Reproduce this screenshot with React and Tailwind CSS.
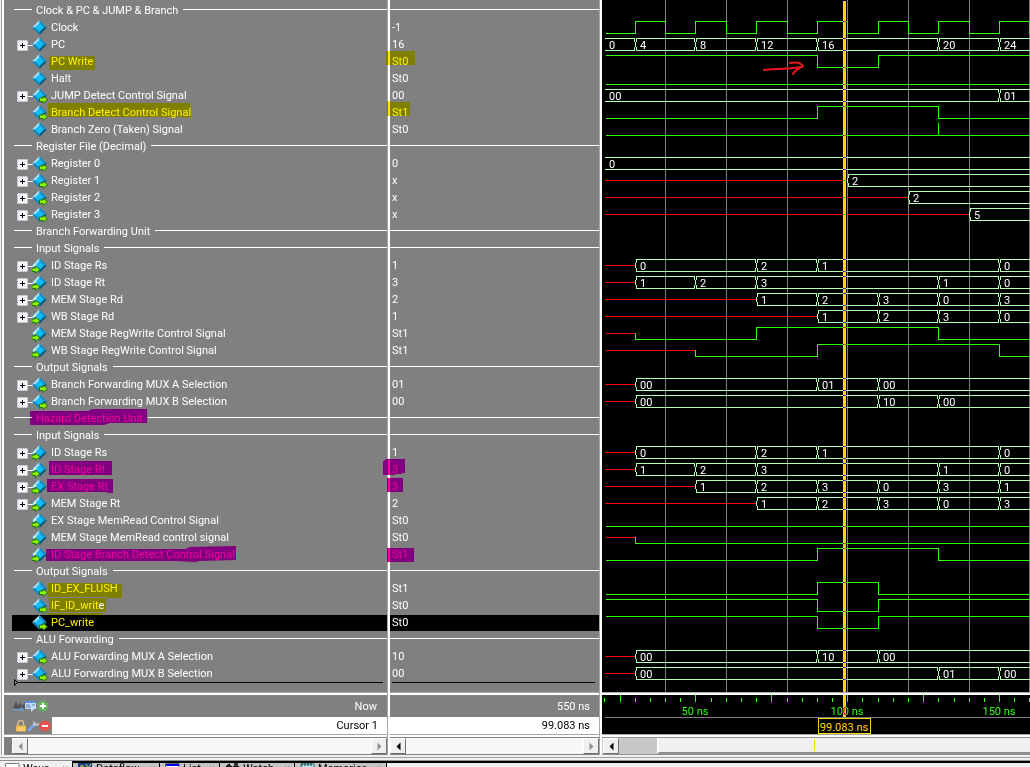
import React from "react";

/* ---------- data ---------- */

const bit = (...steps) => ({ type: "bit", steps });
const bus = (...steps) => ({ type: "bus", steps });

const clockSteps = Array.from({ length: 60 }, (_, i) => [20 + i * 10, i % 2]);

const ROWS = [
  { group: "Clock & PC & JUMP & Branch" },
  { name: "Clock", value: "-1", icon: "net", wave: bit(...clockSteps) },
  { name: "PC", value: "16", icon: "net", open: true, wave: bus([0, "0"], [30, "4"], [50, "8"], [70, "12"], [90, "16"], [130, "20"], [150, "24"]) },
  { name: "PC Write", value: "St0", icon: "net", mark: "yellow", wave: bit([0, 1], [90, 0], [110, 1]) },
  { name: "Halt", value: "St0", icon: "net", wave: bit([0, 0]) },
  { name: "JUMP Detect Control Signal", value: "00", icon: "out", open: true, wave: bus([0, "00"], [150, "01"]) },
  { name: "Branch Detect Control Signal", value: "St1", icon: "out", mark: "yellow", wave: bit([0, 0], [90, 1], [130, 0]) },
  { name: "Branch Zero (Taken) Signal", value: "St0", icon: "net", wave: bit([0, 0], [130, 1], [130, 0]) },
  { group: "Register File (Decimal)" },
  { name: "Register 0", value: "0", icon: "out", open: true, wave: bus([0, "0"]) },
  { name: "Register 1", value: "x", icon: "out", open: true, wave: bus([0, "x"], [100, "2"]) },
  { name: "Register 2", value: "x", icon: "out", open: true, wave: bus([0, "x"], [120, "2"]) },
  { name: "Register 3", value: "x", icon: "out", open: true, wave: bus([0, "x"], [140, "5"]) },
  { group: "Branch Forwarding Unit" },
  { group: "Input Signals" },
  { name: "ID Stage Rs", value: "1", icon: "in", open: true, wave: bus([0, "x"], [30, "0"], [70, "2"], [90, "1"], [150, "0"]) },
  { name: "ID Stage Rt", value: "3", icon: "in", open: true, wave: bus([0, "x"], [30, "1"], [50, "2"], [70, "3"], [130, "1"], [150, "0"]) },
  { name: "MEM Stage Rd", value: "2", icon: "in", open: true, wave: bus([0, "x"], [70, "1"], [90, "2"], [110, "3"], [130, "0"], [150, "3"]) },
  { name: "WB Stage Rd", value: "1", icon: "in", open: true, wave: bus([0, "x"], [90, "1"], [110, "2"], [130, "3"], [150, "0"]) },
  { name: "MEM Stage RegWrite Control Signal", value: "St1", icon: "in", wave: bit([0, "x"], [30, 0], [70, 1], [130, 0]) },
  { name: "WB Stage RegWrite Control Signal", value: "St1", icon: "in", wave: bit([0, "x"], [50, 0], [90, 1], [150, 0]) },
  { group: "Output Signals" },
  { name: "Branch Forwarding MUX A Selection", value: "01", icon: "out", open: true, wave: bus([0, "x"], [30, "00"], [90, "01"], [110, "00"]) },
  { name: "Branch Forwarding MUX B Selection", value: "00", icon: "out", open: true, wave: bus([0, "x"], [30, "00"], [110, "10"], [130, "00"]) },
  { group: "Hazard Detection Unit", mark: "pink" },
  { group: "Input Signals" },
  { name: "ID Stage Rs", value: "1", icon: "in", open: true, wave: bus([0, "x"], [30, "0"], [70, "2"], [90, "1"], [150, "0"]) },
  { name: "ID Stage Rt", value: "3", icon: "in", open: true, mark: "pink", wave: bus([0, "x"], [30, "1"], [50, "2"], [70, "3"], [130, "1"], [150, "0"]) },
  { name: "EX Stage Rt", value: "3", icon: "in", open: true, mark: "pink", wave: bus([0, "x"], [50, "1"], [70, "2"], [90, "3"], [110, "0"], [130, "3"], [150, "1"]) },
  { name: "MEM Stage Rt", value: "2", icon: "in", open: true, wave: bus([0, "x"], [70, "1"], [90, "2"], [110, "3"], [130, "0"], [150, "3"]) },
  { name: "EX Stage MemRead Control Signal", value: "St0", icon: "in", wave: bit([0, 0]) },
  { name: "MEM Stage MemRead control signal", value: "St0", icon: "in", wave: bit([0, "x"], [30, 0]) },
  { name: "ID Stage Branch Detect Control Signal", value: "St1", icon: "in", mark: "pink", wave: bit([0, 0], [90, 1], [130, 0]) },
  { group: "Output Signals" },
  { name: "ID_EX_FLUSH", value: "St1", icon: "out", mark: "yellow", plainValue: true, wave: bit([0, 0], [90, 1], [110, 0]) },
  { name: "IF_ID_writ", tail: "e", value: "St0", icon: "out", mark: "yellow", plainValue: true, wave: bit([0, 1], [90, 0], [110, 1]) },
  { name: "PC_write", value: "St0", icon: "out", mark: "yellow", plainValue: true, selected: true, wave: bit([0, 1], [90, 0], [110, 1]) },
  { group: "ALU Forwarding" },
  { name: "ALU Forwarding MUX A Selection", value: "10", icon: "out", open: true, wave: bus([0, "x"], [30, "00"], [90, "10"], [110, "00"]) },
  { name: "ALU Forwarding MUX B Selection", value: "00", icon: "out", open: true, wave: bus([0, "x"], [30, "00"], [130, "01"], [150, "00"]) },
];

const TABS = ["Wave", "Dataflow", "List", "Watch", "Memories"];

/* ---------- wave geometry ---------- */

const ROW = 17;
const FAR = 4000;
const CURSOR_X = 241;
const timeX = (t) => Math.floor(3.0365 * t - 57.88);
const GREEN = "#30ff10";
const BUS = "#b4ffb4";
const RED = "#ff0000";

function BitWave({ steps, c }) {
  const level = (v) => (v === "x" ? c : v === 1 ? c - 6 : c + 6);
  const out = [];
  steps.forEach(([t, v], i) => {
    const x0 = i === 0 ? 4 : timeX(t);
    const x1 = i + 1 < steps.length ? timeX(steps[i + 1][0]) : FAR;
    const y = level(v);
    out.push(<rect key={"h" + i} x={x0} y={y} width={x1 - x0 + 1} height="1" fill={v === "x" ? RED : GREEN} />);
    if (i > 0) {
      const p = level(steps[i - 1][1]);
      out.push(<rect key={"v" + i} x={x0} y={Math.min(p, y)} width="1" height={Math.abs(p - y) + 1} fill={GREEN} />);
    }
  });
  return <g>{out}</g>;
}

function BusWave({ steps, c }) {
  const top = c - 6;
  const bottom = c + 6;
  return (
    <g>
      {steps.map(([t, v], i) => {
        const first = i === 0;
        const last = i + 1 === steps.length;
        const x0 = first ? 3 : timeX(t);
        const x1 = last ? FAR : timeX(steps[i + 1][0]);
        if (v === "x") return <rect key={i} x={x0} y={c} width={x1 - x0} height="1" fill={RED} />;
        const a = first ? x0 : x0 + 1;
        const b = last ? x1 : x1 - 1;
        return (
          <g key={i} fill={BUS}>
            <rect x={a} y={top} width={b - a + 1} height="1" />
            <rect x={a} y={bottom} width={b - a + 1} height="1" />
            {!first && (
              <>
                <rect x={x0 + 1} y={top} width="1" height="4" />
                <rect x={x0} y={top + 4} width="1" height="5" />
                <rect x={x0 + 1} y={bottom - 3} width="1" height="4" />
              </>
            )}
            {!last && (
              <>
                <rect x={x1 - 1} y={top} width="1" height="4" />
                <rect x={x1 - 1} y={bottom - 3} width="1" height="4" />
              </>
            )}
            <text x={first ? 7 : x0 + 5} y={c + 5} fill="#fff">{v}</text>
          </g>
        );
      })}
    </g>
  );
}

function Waves() {
  return (
    <svg className="block h-[692px] w-full bg-black" role="img" aria-label="Waveforms" shapeRendering="crispEdges">
      {Array.from({ length: 40 }, (_, i) => (
        <rect key={i} x={timeX(40 + i * 20)} y="0" width="1" height="692" fill="#808080" />
      ))}
      {ROWS.map((r, i) => {
        if (!r.wave) return null;
        const Shape = r.wave.type === "bit" ? BitWave : BusWave;
        return <Shape key={i} steps={r.wave.steps} c={10 + i * ROW} />;
      })}
      <rect className="mix-blend-difference" x={CURSOR_X} y="1" width="3" height="691" fill="#ffd700" />
      <path
        d="M162 70 C172 69 184 69 200 67 M188 63 C194 62 199 63 201 66 C198 68 193 70 191 74"
        fill="none" stroke="#e8171b" strokeWidth="2" strokeLinecap="round" strokeLinejoin="round" shapeRendering="auto"
      />
    </svg>
  );
}

function Timeline() {
  return (
    <svg className="block h-[39px] w-full bg-black" role="img" aria-label="Time axis" shapeRendering="crispEdges">
      {Array.from({ length: 160 }, (_, i) => {
        const t = 20 + i * 5;
        const major = t % 25 === 0;
        return <rect key={t} x={timeX(t)} y={major ? 0 : 3} width="1" height={major ? 7 : 4} fill={GREEN} />;
      })}
      {[50, 100, 150].map((t) => (
        <text key={t} x={timeX(t)} y="20" fill={GREEN} textAnchor="middle">{t} ns</text>
      ))}
      <rect x="3" y="22" width="4000" height="1" fill="#808080" />
      <rect className="mix-blend-difference" x={CURSOR_X} y="0" width="3" height="22" fill="#ffd700" />
      <rect x="216" y="23" width="53" height="16" fill="#ffd700" />
      <rect x="217" y="24" width="51" height="14" fill="#000" />
      <text x="242" y="36" fill="#ffd700" textAnchor="middle">99.083 ns</text>
    </svg>
  );
}

/* ---------- small parts ---------- */

function SignalIcon({ kind }) {
  return (
    <svg className="absolute left-8 top-px h-4 w-4" viewBox="0 0 16 16" aria-hidden="true">
      <path d="M7.5 0 L7.5 7.5 L0 7.5Z" fill="#a5def6" />
      <path d="M7.5 0 L15 7.5 L7.5 7.5Z" fill="#168fc6" />
      <path d="M0 7.5 L7.5 7.5 L7.5 15Z" fill="#0c86bd" />
      <path d="M15 7.5 L7.5 7.5 L7.5 15Z" fill="#06597f" />
      <path d="M7.5 3 L12 7.500 L7.5 12 L3 7.500Z" fill="#10bdf6" />
      {kind === "out" && <path d="M7.5 10 H11 V8 L15.5 11.7 L11 15.5 V13.5 H7.5Z" fill="#8cf000" stroke="#16620a" strokeWidth=".8" />}
      {kind === "in" && (
        <>
          <path d="M1 8.5 L3.5 6.5 V9" stroke="#e8f8c8" strokeWidth="1.2" fill="none" />
          <path d="M0 10 H3.5 V8 L8 11.7 L3.5 15.5 V13.5 H0Z" fill="#8cf000" stroke="#16620a" strokeWidth=".8" />
        </>
      )}
    </svg>
  );
}

function Expander({ label }) {
  return (
    <button type="button" aria-label={`Expand ${label}`} className="absolute left-[17px] top-[4px] h-[11px] w-[11px] rounded-[1px] border border-[#c8c8d0] bg-[#f4f4f8]">
      <svg className="block h-[9px] w-[9px]" viewBox="0 0 9 9" aria-hidden="true" shapeRendering="crispEdges">
        <path d="M2 4H7V5H2Z M4 2H5V7H4Z" fill="#000" />
      </svg>
    </button>
  );
}

const inkOf = (mark) => (mark === "yellow" ? "text-[#fff000]" : mark === "pink" ? "text-[#f0009a]" : "text-white");

function NameRow({ row }) {
  if (row.group) {
    return (
      <li className="relative flex h-[17px] items-start pl-[14px]">
        <span className="mt-[7px] h-px w-[18px] bg-white" />
        <span className={`ml-1 mr-[5px] ${inkOf(row.mark)}`}>{row.group}</span>
        <span className="mt-[7px] h-px flex-1 bg-white" />
      </li>
    );
  }
  return (
    <li className="relative h-[17px]">
      {row.selected && <span className="absolute bottom-0 left-3 right-0 top-px bg-black" />}
      {row.open && (
        <>
          <span className="absolute left-7 top-[9px] h-px w-[5px] bg-white" />
          <Expander label={row.name} />
        </>
      )}
      <SignalIcon kind={row.icon} />
      <span className={`relative ml-[51px] ${inkOf(row.mark)}`}>
        {row.name}
        {row.tail && <span className="text-white">{row.tail}</span>}
      </span>
    </li>
  );
}

function ValueRow({ row }) {
  if (row.group) {
    return (
      <li className="relative h-[17px] pt-[7px]">
        <span className="block h-px bg-white" />
      </li>
    );
  }
  return (
    <li className={`relative h-[17px] pl-[2px] ${row.plainValue ? "text-white" : inkOf(row.mark)}`}>
      {row.selected && <span className="absolute bottom-0 left-0 right-0 top-px bg-black" />}
      <span className="relative">{row.value}</span>
    </li>
  );
}

function NameMarks() {
  return (
    <svg className="absolute left-0 top-0 h-[692px] w-full" aria-hidden="true">
      <g fill="#808000">
        <path d="M49 56H95V70H49Z" />
        <path d="M48 103H190L191 117L185 118L183 117H48Z" />
        <path d="M48 583H110L112 584H122V598H108L106 597H48Z" />
        <path d="M49 598H106V612H49Z" />
        <path d="M47 613H103V615H47Z" />
      </g>
      <g fill="#800080">
        <path d="M30 411L88 411L92 409H147V423H110L104 425H30Z" />
        <path d="M49 461H112V475H49Z" />
        <path d="M47 479H113V493H108L106 492H47Z" />
        <path d="M46 549H185L190 547L236 546V560L200 561L195 562L175 561H46Z" />
      </g>
    </svg>
  );
}

function ValueMarks() {
  return (
    <svg className="pointer-events-none absolute -left-2 top-0 h-[692px] w-16" aria-hidden="true" shapeRendering="crispEdges">
      <g fill="#808000">
        <path d="M4 51H33V65H4Z" />
        <path d="M5 102H28V116H5Z" />
      </g>
      <g fill="#800080">
        <path d="M1 461L5 459H23V473L10 475H1Z" />
        <path d="M5 478H21V492H5Z" />
        <path d="M5 548H32V562H5Z" />
      </g>
      <path d="M6 51H8V65H6Z M6 101H8V116H6Z" fill="#ffe600" />
      <path d="M6 460H8V475H6Z M6 478H8V492H6Z M6 548H8V562H6Z" fill="#ff009c" />
    </svg>
  );
}

function Arrow({ dir, tone }) {
  return (
    <svg className="mx-auto block h-[9px] w-[9px]" viewBox="0 0 9 9" aria-hidden="true">
      <path d={dir === "left" ? "M6.5 .5V8.5L2.5 4.5Z" : "M2.5 .5V8.5L6.5 4.5Z"} className={tone} />
    </svg>
  );
}

function ScrollButton({ dir, label, tone }) {
  return (
    <button type="button" aria-label={label} className="h-full w-4 shrink-0 border border-b-[#707070] border-l-white border-r-[#707070] border-t-white bg-[#f0f0f0]">
      <Arrow dir={dir} tone={tone} />
    </button>
  );
}

function IdleScroll({ label, leftTone }) {
  return (
    <div className="flex h-[17px] w-full border-b border-[#808080]">
      <ScrollButton dir="left" label={`Scroll ${label} left`} tone={leftTone} />
      <div className="flex-1 bg-[#f7f7f7] bg-[repeating-conic-gradient(#efefef_0_25%,#ffffff_0_50%)] bg-[length:2px_2px]" />
      <ScrollButton dir="right" label={`Scroll ${label} right`} tone="fill-[#909090]" />
    </div>
  );
}

function Ridge() {
  return <div className="h-[3px] shrink-0 border-t border-[#a8a8a8] bg-white" />;
}

function Gutter() {
  return <div className="w-[3px] shrink-0 border-l border-[#a8a8a8] bg-white" />;
}

function NowIcons() {
  return (
    <div className="flex items-center pl-[9px]">
      <button type="button" aria-label="Edit grid and timeline">
        <svg className="block h-3 w-3" viewBox="0 0 12 12">
          <path d="M0 8L3 1L5 6L7 2L9 6L12 2V9H0Z" fill="#545454" />
          <path d="M0 9.500H10L8 7.500M10 9.500L8 11" stroke="#6a9fd8" strokeWidth="1.400" fill="none" />
        </svg>
      </button>
      <button type="button" aria-label="Toggle leaf names">
        <svg className="block h-3 w-3" viewBox="0 0 12 12">
          <path d="M0 1H11V9H9L6 12V9H0Z" fill="#c8dcf5" />
          <path d="M0 1H11V3H0Z" fill="#5b8fd8" />
          <path d="M1 5H5M1 7H6M7 5H10" stroke="#5f86bd" />
        </svg>
      </button>
      <button type="button" aria-label="Add cursor">
        <svg className="block h-3 w-3" viewBox="0 0 12 12">
          <circle cx="6" cy="6" r="5.500" fill="#62b35c" />
          <path d="M6 3V9M3 6H9" stroke="#fff" strokeWidth="1.800" />
        </svg>
      </button>
    </div>
  );
}

function CursorIcons() {
  return (
    <div className="flex w-12 shrink-0 items-center pl-[11px]">
      <button type="button" aria-label="Lock cursor">
        <svg className="block h-3 w-3" viewBox="0 0 12 12">
          <path d="M3 6V3.500A2.500 2.500 0 0 1 8.500 3V5" stroke="#d8bd86" strokeWidth="1.500" fill="none" />
          <path d="M1 5.500H11V11.500H1Z" fill="#f2b84b" />
          <path d="M2 8H10M2 10H10" stroke="#ffdf91" />
        </svg>
      </button>
      <button type="button" aria-label="Edit cursor">
        <svg className="block h-3 w-3" viewBox="0 0 12 12">
          <path d="M2 10L7 5" stroke="#7aa7ea" strokeWidth="3" strokeLinecap="round" />
          <path d="M6.500 5.500L9 3M7 1.500V4.500L10.500 5L12 3" stroke="#c4cfdd" strokeWidth="1.500" fill="none" />
        </svg>
      </button>
      <button type="button" aria-label="Remove cursor">
        <svg className="block h-3 w-3" viewBox="0 0 12 12">
          <circle cx="6" cy="6" r="5.500" fill="#e2544c" />
          <path d="M3 6H9" stroke="#fff" strokeWidth="2" />
        </svg>
      </button>
    </div>
  );
}

function TabIcon({ index }) {
  return (
    <svg className="h-[14px] w-[15px] shrink-0" viewBox="0 0 15 14" aria-hidden="true">
      {index === 0 && (
        <>
          <path d="M.5 .5H14V13.500H.5Z" fill="#fff" stroke="#808080" />
          <path d="M2 8H5V5H9V8H13" stroke="#2050c0" fill="none" />
        </>
      )}
      {index === 1 && (
        <>
          <path d="M0 0H14V14H0Z" fill="#0b3f86" />
          <path d="M2 3H6M8 1L10 5L13 1" stroke="#ffe23c" fill="none" />
        </>
      )}
      {index === 2 && (
        <>
          <path d="M.5 .5H14V13.500H.5Z" fill="#fff" stroke="#606060" />
          <path d="M1 1H14V3H1Z" fill="#0000f0" />
        </>
      )}
      {index === 3 && (
        <g fill="none" stroke="#000" strokeWidth="1.500">
          <circle cx="4" cy="6" r="3" />
          <circle cx="11" cy="6" r="3" />
          <path d="M2 3L5 1M9 1H13" />
        </g>
      )}
      {index === 4 && (
        <>
          <path d="M1 1H14V13H1Z" fill="#aee4ee" stroke="#307080" />
          <path d="M2 0V3M5 0V3M8 0V3M11 0V3" stroke="#103840" />
        </>
      )}
    </svg>
  );
}

const TAB_WIDTHS = ["w-[73px]", "w-[87px]", "w-[60px]", "w-[75px]", "w-[92px]"];

/* ---------- page ---------- */

export default function App() {
  return (
    <div className="flex h-screen flex-col overflow-hidden bg-[#f0f0f0] font-['Roboto',sans-serif] text-[11px] leading-[17px]">
      <main className="flex shrink-0">
        <div className="flex w-1 shrink-0 border-l border-[#f0f0f0] bg-white">
          <div className="w-px bg-[#a0a0a0]" />
        </div>

        <section aria-label="Signals" className="-ml-1 flex w-[387px] shrink-0 flex-col pl-1">
          <div className="relative -ml-1 h-[692px] pl-1">
            <div className="absolute bottom-0 left-1 right-0 top-0 bg-[#808080]" />
            <NameMarks />
            <ul className="relative -ml-1 pt-[2px]">
              {ROWS.map((r, i) => <NameRow key={i} row={r} />)}
            </ul>
            <div className="relative ml-[10px] mr-1 h-px bg-black">
              <svg className="absolute -top-[3px] left-0 h-[7px] w-1" viewBox="0 0 4 7" aria-hidden="true">
                <path d="M.5 .5V6.500L3.500 3.500Z" fill="#808080" stroke="#000" />
              </svg>
            </div>
          </div>
          <Ridge />
          <div className="flex h-[22px] items-center justify-between bg-[#808080] pr-[10px] text-white">
            <NowIcons />
            <span>Now</span>
          </div>
          <div className="flex h-[17px] bg-[#808080]">
            <CursorIcons />
            <span className="flex-1 bg-white pr-[9px] text-right text-black">Cursor 1</span>
          </div>
          <Ridge />
          <div className="bg-[#808080] pl-2 pt-px">
            <IdleScroll label="names" leftTone="fill-[#909090]" />
          </div>
        </section>

        <Gutter />

        <section aria-label="Values" className="flex w-[209px] shrink-0 flex-col">
          <div className="relative h-[692px] bg-[#808080]">
            <ValueMarks />
            <ul className="relative pt-[2px]">
              {ROWS.map((r, i) => <ValueRow key={i} row={r} />)}
            </ul>
            <div className="ml-[2px] mr-1 h-px bg-black" />
          </div>
          <Ridge />
          <div className="flex h-[22px] items-center justify-end bg-[#808080] pr-[9px] text-white">550 ns</div>
          <div className="h-[17px] bg-white pr-[9px] text-right text-black">99.083 ns</div>
          <Ridge />
          <div className="bg-[#808080] pt-px">
            <IdleScroll label="values" leftTone="fill-black" />
          </div>
        </section>

        <Gutter />

        <section aria-label="Waves" className="flex min-w-0 flex-1 flex-col">
          <Waves />
          <Ridge />
          <Timeline />
          <Ridge />
          <div className="flex h-[18px] items-stretch border-y border-[#909090] bg-[#c8c8c8] pl-px">
            <ScrollButton dir="left" label="Scroll waves left" tone="fill-black" />
            <div className="w-[38px] shrink-0" />
            <div className="flex flex-1 items-center border-b-2 border-l-2 border-b-[#909090] border-l-white bg-[#f0f0f0] pl-[155px]">
              <span className="h-3 w-px bg-[#ffd700]" />
            </div>
          </div>
        </section>
      </main>

      <div className="h-[6px] shrink-0 border-b border-[#909090] bg-[#f0f0f0] pt-[2px]">
        <div className="h-px bg-[#a0a0a0]" />
      </div>

      <nav aria-label="Windows" className="flex h-6 shrink-0 items-start bg-[#f0f0f0]">
        {TABS.map((t, i) => (
          <button
            key={t}
            type="button"
            className={`flex h-6 shrink-0 items-start gap-[3px] border-r border-black pl-[5px] pr-1 text-black ${TAB_WIDTHS[i]} ${i === 0 ? "bg-[#f0f0f0] pt-[2px]" : "border-t-2 bg-[#c4c4c4]"}`}
          >
            <TabIcon index={i} />
            <span className="flex-1 text-left leading-3">{t}</span>
            <span className="leading-3 text-[#909090]">×</span>
          </button>
        ))}
        <div className="h-[2px] flex-1 bg-black" />
      </nav>
    </div>
  );
}
